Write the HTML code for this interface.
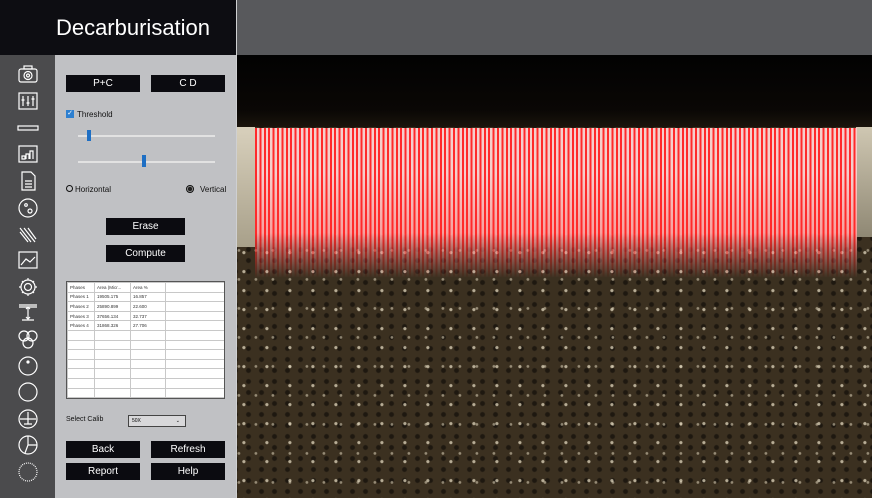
<!DOCTYPE html>
<html><head><meta charset="utf-8"><style>
*{margin:0;padding:0;box-sizing:border-box}
body{width:872px;height:498px;overflow:hidden;background:#58595c;font-family:"Liberation Sans",sans-serif;position:relative}
.abs{position:absolute}
#title{left:0;top:0;width:236px;height:55px;background:#0d0d12;color:#fff;font-size:22px;line-height:55px;text-align:center;padding-left:30px}
#side{left:0;top:55px;width:55px;height:443px;background:#4b4b4d}
#panel{left:55px;top:55px;width:181px;height:443px;background:#c0c1c4}
#sep{left:236px;top:0;width:1px;height:498px;background:#cfd0d2}
.btn{position:absolute;background:#0b0b10;color:#fff;font-size:10px;text-align:center}
.t{position:absolute;font-size:8px;color:#111}
#img{left:237px;top:55px;width:635px;height:443px;overflow:hidden;
background:
radial-gradient(circle at 30% 40%,rgba(225,215,190,.75) 0 1.2px,transparent 2px) 0 0/23px 19px,
radial-gradient(circle at 70% 60%,rgba(210,200,175,.6) 0 1px,transparent 1.8px) 7px 4px/17px 29px,
radial-gradient(circle at 50% 50%,rgba(10,8,5,.6) 0 1.8px,transparent 3px) 5px 2px/13px 11px,
#3b3020;}
#top{left:237px;top:55px;width:635px;height:72px;background:linear-gradient(#020202,#0a0705 55px,#1a140c 72px)}
#band{left:255px;top:128px;width:602px;height:150px;
background:linear-gradient(rgba(255,60,60,0) 30%,rgba(255,40,40,.35) 80%),repeating-linear-gradient(90deg,#ff2a2a 0 2px,#f4cfcd 2px 4.4px);
-webkit-mask:linear-gradient(#000 0,#000 105px,rgba(0,0,0,.6) 122px,transparent 150px);}
#lt{left:237px;top:127px;width:18px;height:120px;background:linear-gradient(#d8d0bc,#a8a08a)}
#rt{left:856px;top:127px;width:16px;height:110px;background:linear-gradient(#cfc7b2,#8f8874)}
table{border-collapse:collapse;font-size:4.5px;color:#333}
td{border:1px solid #c8c8c8;height:9.6px;padding-left:2px;background:#fff}
</style></head><body>
<div id="title" class="abs">Decarburisation</div>
<div id="side" class="abs"></div>
<div id="panel" class="abs"></div>
<div id="sep" class="abs"></div>
<div id="img" class="abs"></div>
<div id="top" class="abs"></div>
<div id="lt" class="abs"></div><div id="rt" class="abs"></div>
<div id="band" class="abs"></div>

<svg class="abs" style="left:0;top:55px" width="55" height="443" fill="none" stroke="#fff" stroke-width="1.2">
<g transform="translate(0,-55)">
<rect x="19" y="69" width="18" height="13" rx="2"/><rect x="24" y="66" width="8" height="3"/><circle cx="28" cy="75.5" r="4"/><circle cx="28" cy="75.5" r="1.5"/>
<rect x="19" y="93" width="18" height="16"/><path d="M23 96v10M28 96v10M33 96v10M21.5 100h3M26.5 103h3M31.5 99h3"/>
<rect x="18" y="126" width="20" height="4"/>
<rect x="19" y="146" width="18" height="16"/><path d="M22 159h3v-3h-3zM26 159v-5h3v5M30 159v-8h3v8"/>
<path d="M22 172h9l4 4v14h-13z M25 181h7M25 184h7M25 187h7"/>
<circle cx="28" cy="208" r="9"/><circle cx="26" cy="205" r="1.3"/><circle cx="30" cy="211" r="2"/>
<path d="M20 228l11 14M24 228l11 14M28 228l8 11M20 232l8 10"/>
<rect x="19" y="252" width="18" height="16"/><path d="M21 265l5-6 4 3 5-5"/>
<circle cx="28" cy="287" r="3.5"/><path d="M28 278v2M28 294v2M19 287h2M35 287h2M22 281l1.5 1.5M32.5 291.5l1.5 1.5M34 281l-1.5 1.5M22 293l1.5-1.5"/><circle cx="28" cy="287" r="7"/>
<path d="M19 305h18M19 307h18M28 307v12M22 320h12M26 309l2-2 2 2M26 317l2 2 2-2"/>
<circle cx="24" cy="336" r="5"/><circle cx="32" cy="336" r="5"/><circle cx="28" cy="343" r="5"/>
<circle cx="28" cy="366" r="9"/><circle cx="28" cy="362" r="1" fill="#fff"/>
<circle cx="28" cy="392" r="9"/>
<circle cx="28" cy="419" r="9"/><path d="M20 419h16M28 412v12M24 424h8"/>
<circle cx="28" cy="445" r="9"/><path d="M28 445v-9M28 445h9M28 445l-3 8"/>
<circle cx="28" cy="472" r="9" stroke-dasharray="1 1"/>
</g></svg>

<div class="btn" style="left:66px;top:75px;width:74px;height:17px;line-height:17px">P+C</div>
<div class="btn" style="left:151px;top:75px;width:74px;height:17px;line-height:17px">C D</div>
<div class="abs" style="left:66px;top:110px;width:8px;height:8px;background:#2d7fd0;color:#fff;font-size:7px;line-height:8px;text-align:center">✓</div>
<div class="t" style="left:77px;top:110px">Threshold</div>
<div class="abs" style="left:78px;top:135px;width:137px;height:2px;background:#e2e2e2"></div>
<div class="abs" style="left:87px;top:130px;width:4px;height:11px;background:#1e6fc4"></div>
<div class="abs" style="left:78px;top:161px;width:137px;height:2px;background:#e2e2e2"></div>
<div class="abs" style="left:142px;top:155px;width:4px;height:12px;background:#1e6fc4"></div>
<div class="abs" style="left:66px;top:185px;width:7px;height:7px;border:1px solid #111;border-radius:50%"></div>
<div class="t" style="left:75px;top:185px">Horizontal</div>
<div class="abs" style="left:186px;top:185px;width:8px;height:8px;border:1px solid #111;border-radius:50%;background:radial-gradient(#222 0 2px,#aaa 2.5px)"></div>
<div class="t" style="left:200px;top:185px">Vertical</div>
<div class="btn" style="left:106px;top:218px;width:79px;height:17px;line-height:17px">Erase</div>
<div class="btn" style="left:106px;top:245px;width:79px;height:17px;line-height:17px">Compute</div>

<div class="abs" style="left:66px;top:281px;width:159px;height:118px;border:1px solid #555;background:#fff;overflow:hidden">
<table style="width:158px">
<colgroup><col style="width:27px"><col style="width:36px"><col style="width:35px"><col></colgroup>
<tr><td>Phases</td><td>Area (Micr...</td><td>Area %</td><td></td></tr>
<tr><td>Phases 1</td><td>19505.175</td><td>16.857</td><td></td></tr>
<tr><td>Phases 2</td><td>25890.899</td><td>22.600</td><td></td></tr>
<tr><td>Phases 3</td><td>37656.134</td><td>32.737</td><td></td></tr>
<tr><td>Phases 4</td><td>31868.326</td><td>27.706</td><td></td></tr>
<tr><td></td><td></td><td></td><td></td></tr><tr><td></td><td></td><td></td><td></td></tr>
<tr><td></td><td></td><td></td><td></td></tr><tr><td></td><td></td><td></td><td></td></tr>
<tr><td></td><td></td><td></td><td></td></tr><tr><td></td><td></td><td></td><td></td></tr>
<tr><td></td><td></td><td></td><td></td></tr>
</table></div>

<div class="t" style="left:66px;top:416px;font-size:7px">Select Calib</div>
<div class="abs" style="left:128px;top:415px;width:58px;height:12px;border:1px solid #444;background:#d8d8da;font-size:5px;line-height:10px;padding-left:3px">50X<span style="position:absolute;right:5px">⌄</span></div>
<div class="btn" style="left:66px;top:441px;width:74px;height:17px;line-height:17px">Back</div>
<div class="btn" style="left:151px;top:441px;width:74px;height:17px;line-height:17px">Refresh</div>
<div class="btn" style="left:66px;top:463px;width:74px;height:17px;line-height:17px">Report</div>
<div class="btn" style="left:151px;top:463px;width:74px;height:17px;line-height:17px">Help</div>
</body></html>
